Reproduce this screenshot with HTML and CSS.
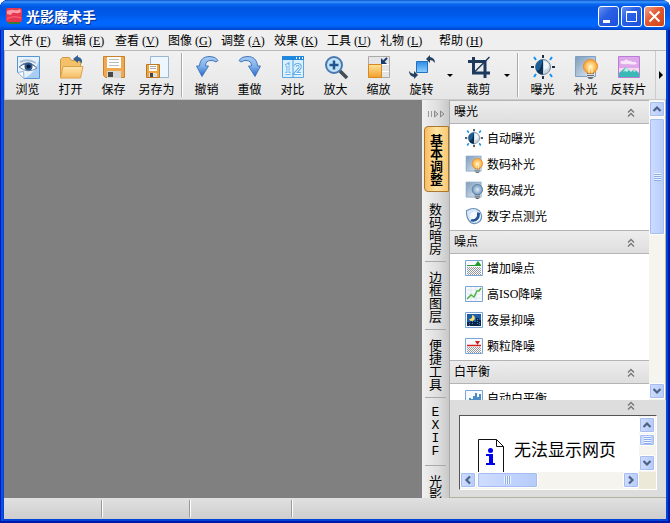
FILE: index.html
```html
<!DOCTYPE html>
<html lang="zh-CN">
<head>
<meta charset="utf-8">
<title>光影魔术手</title>
<link rel="stylesheet" href="styles.css">
</head>
<body>
<svg class="defs" aria-hidden="true">
  <defs>
    <linearGradient id="sky" x1="0" y1="0" x2="1" y2="1"><stop offset="0" stop-color="#7d9cba"/><stop offset="1" stop-color="#e4edf5"/></linearGradient>
    <linearGradient id="arc" x1="0" y1="0" x2="0" y2="1"><stop offset="0" stop-color="#a8cbf2"/><stop offset=".5" stop-color="#7fb0ea"/><stop offset="1" stop-color="#2565cc"/></linearGradient>
    <linearGradient id="gold" x1="0" y1="0" x2="0" y2="1"><stop offset="0" stop-color="#ffe39a"/><stop offset="1" stop-color="#f0a02a"/></linearGradient>
    <linearGradient id="folder" x1="0" y1="0" x2="0" y2="1"><stop offset="0" stop-color="#ffe6ae"/><stop offset="1" stop-color="#f5bd62"/></linearGradient>
    <linearGradient id="blue" x1="0" y1="0" x2="0" y2="1"><stop offset="0" stop-color="#2f8ae8"/><stop offset="1" stop-color="#8fd0fb"/></linearGradient>
    <radialGradient id="glow"><stop offset="0" stop-color="#fff6c8"/><stop offset="1" stop-color="#fba42e"/></radialGradient>
    <radialGradient id="dim"><stop offset="0" stop-color="#dce9f4"/><stop offset="1" stop-color="#6f97bd"/></radialGradient>
    <symbol id="sun" viewBox="0 0 24 24">
      <path d="M12 0v3M12 21v3M0 12h3M21 12h3" stroke="#1b3049" stroke-width="2"/>
      <path d="M3 2l2 3M21 2l-2 3M3 22l2-3M21 22l-2-3" stroke="#1592f0" stroke-width="2"/>
      <circle cx="12" cy="12" r="7.500" fill="#c9d8e2" stroke="#71828f"/>
      <path d="M12 4.500a7.500 7.500 0 0 0 0 15z" fill="#1c5e98"/>
      <path d="M12 4.500v15q-5 0-6.500-4 4 1 6.500-11z" fill="#102f52"/>
      <path d="M13 6q5 1 5 5-1 3-5 4z" fill="#f0f5f8"/>
    </symbol>
    <symbol id="bulb" viewBox="0 0 24 24">
      <path d="M1.500 1.500h20v20h-20z" fill="url(#sky)" stroke="#7da0c4"/>
      <path d="M13 17h7v5l-2 2h-3l-2-2z" fill="#68717b"/><path d="M13 19.500h7M13 21.500h7" stroke="#d6dce2"/>
      <circle cx="16.500" cy="11.500" r="7" fill="url(#glow)" stroke="#e8892a"/><path d="M15 18v-5l1.500-2 1.500 2v5" fill="none" stroke="#fff5c8"/>
    </symbol>
    <symbol id="bulb-off" viewBox="0 0 24 24">
      <path d="M1.500 1.500h20v20h-20z" fill="url(#sky)" stroke="#7da0c4"/>
      <path d="M13 17h7v5l-2 2h-3l-2-2z" fill="#56636f"/><path d="M13 19.500h7M13 21.500h7" stroke="#d6dce2"/>
      <circle cx="16.500" cy="11.500" r="7" fill="url(#dim)" stroke="#4c749c"/>
    </symbol>
    <symbol id="undo" viewBox="0 0 24 24"><path d="M1.500 11h3C5 4 9 1.500 15 1.500q6 0 8 4l-2 1.500q-2-1.500-5-1.500-5.500 0-5.500 5.500h3L7 21.500z" fill="url(#arc)" stroke="#4377bd"/></symbol>
    <symbol id="chev" viewBox="0 0 8 10"><path d="M1 4.500l3-3 3 3M1 8.500l3-3 3 3" fill="none" stroke="#777" stroke-width="1.400"/></symbol>
    <symbol id="up" viewBox="0 0 10 10"><path d="M1.500 7L5 3.500 8.500 7" fill="none" stroke="#4d6185" stroke-width="2.200"/></symbol>
    <symbol id="tile" viewBox="0 0 18 16"><path d="M.5.500h17v15H.5z" fill="#f6faff" stroke="#7ba5d2"/></symbol>
    <pattern id="grain" width="2" height="2" patternUnits="userSpaceOnUse"><path d="M0 0h1v1H0zM1 1h1v1H1z" fill="#999"/></pattern>
  </defs>
</svg>
<div class="window">
  <header class="titlebar">
    <svg class="logo" viewBox="0 0 16 16"><path d="M2 13h12v3H2z" fill="#397b37"/><rect width="16" height="14" rx="2" fill="#e5374f"/><path d="M1 3q4-2 7-1t6-1l1 3q-3 2-6 1T5 7L1 6z" fill="#ff9aa8"/><path d="M1 11q6-4 14-1" stroke="#ff7080" fill="none"/></svg>
    <h1>光影魔术手</h1>
    <div class="window-controls">
      <button aria-label="最小化"><svg viewBox="0 0 19 19"><path d="M4 13h7v3H4z" fill="#fff"/></svg></button>
      <button aria-label="最大化"><svg viewBox="0 0 19 19"><path d="M4.500 5.500h10v9h-10zM4 5h11" fill="none" stroke="#fff"/><path d="M4 5h11" stroke="#fff" stroke-width="2"/></svg></button>
      <button class="close" aria-label="关闭"><svg viewBox="0 0 19 19"><path d="M4.500 4.500l10 10M14.500 4.500l-10 10" stroke="#fff" stroke-width="2"/></svg></button>
    </div>
  </header>
  <nav class="menubar">
    <button>文件<span>(<u>F</u>)</span></button><button>编辑<span>(<u>E</u>)</span></button><button>查看<span>(<u>V</u>)</span></button><button>图像<span>(<u>G</u>)</span></button><button>调整<span>(<u>A</u>)</span></button><button>效果<span>(<u>K</u>)</span></button><button>工具<span>(<u>U</u>)</span></button><button class="wide">礼物<span>(<u>L</u>)</span></button><button>帮助<span>(<u>H</u>)</span></button>
  </nav>
  <div class="toolbar" role="toolbar">
    <button class="tool"><svg viewBox="0 0 24 24"><path d="M1.500 1.500h22v22H8l-6.500-6z" fill="#e8f2fc"/><path d="M23 5v18H9q10-5 14-18z" fill="#a9cdf3"/><path d="M1.500 18V1.500h22v22H8" fill="none" stroke="#5796d5"/><path d="M3 12q9-8 18 1-9 6-18-1z" fill="#fff" stroke="#6c87a8"/><path d="M3 12Q11 3 21 12.500 12 7 3 12z" fill="#5c7796"/><circle cx="12.500" cy="11.500" r="4" fill="#315888"/><circle cx="12.500" cy="11.500" r="2" fill="#071c3b"/><path d="M4 7q8-4 16 1" fill="none" stroke="#a9bfd8" stroke-width="2"/><path d="M1.500 17.500l6-1 .5 7z" fill="#fff" stroke="#8fb4da"/></svg>浏览</button>
    <button class="tool"><svg viewBox="0 0 24 24"><path d="M1.500 22V4.500l2-2h7l2 3h9V22z" fill="#f4c069" stroke="#d09a41"/><path d="M4 11.500h20L21.500 23H1.500z" fill="url(#folder)" stroke="#dba24c"/><path d="M14 4l5-4v2q5 1 4 7-1-3-4-3v2z" fill="#315f91"/></svg>打开</button>
    <button class="tool"><svg viewBox="0 0 24 24"><path d="M1.500 1.500h21v21h-19l-2-2z" fill="#f0a94e" stroke="#c9832c"/><path d="M5 2h14v11H5z" fill="#fff"/><path d="M7 4.500h10M7 7.500h10M7 10.500h10" stroke="#bbb"/><path d="M5 16h14v7H5z" fill="#d5d7d9"/><path d="M6 17h5v5H6z" fill="#46484b"/></svg>保存</button>
    <button class="tool"><svg viewBox="0 0 24 24"><path d="M5.500 1.500h18v21h-18z" fill="#eef6fd" stroke="#98b7d5"/><path d="M1.500 9.500h13v13h-13z" fill="#f0a640" stroke="#bc7923"/><path d="M4 10h8v6H4z" fill="#fff"/><path d="M5 11.500h6M5 13.500h6" stroke="#aaa"/><path d="M4 18h8v4H4z" fill="#ddd"/><path d="M5 18h3v4H5z" fill="#444"/></svg>另存为</button>
    <i class="divider"></i>
    <button class="tool"><svg viewBox="0 0 24 24"><use href="#undo"/></svg>撤销</button>
    <button class="tool"><svg viewBox="0 0 24 24"><g transform="matrix(-1 0 0 1 24 0)"><use href="#undo"/></g></svg>重做</button>
    <button class="tool"><svg viewBox="0 0 24 24"><path d="M1.500 1.500h21v21h-21z" fill="#d9f0fe" stroke="#60a6de"/><path d="M1 1h22v4H1z" fill="#2087df"/><path d="M15 3h1M18 3h1M21 3h1" stroke="#fff" stroke-width="2"/><path d="M12 5v18" stroke="#4e9ee0"/><path d="M4.500 11L7 9.500V18M4.500 18.500h5M14 11q1-2 3.500-1.500t1.500 3.500l-5 5.500h6" fill="none" stroke="#68b0ea" stroke-width="3"/><path d="M4.500 11L7 9.500V18M4.500 18.500h5M14 11q1-2 3.500-1.500t1.500 3.500l-5 5.500h6" fill="none" stroke="#fff"/></svg>对比</button>
    <button class="tool"><svg viewBox="0 0 24 24"><path d="M15 15l8 8" stroke="#444c56" stroke-width="3.500"/><circle cx="10" cy="10" r="8" fill="#c3e4f8" stroke="#4a79b2" stroke-width="2"/><path d="M10 5.500v9M5.500 10h9" stroke="#21558f" stroke-width="2.500"/></svg>放大</button>
    <button class="tool"><svg viewBox="0 0 24 24"><path d="M1.500 1.500h21v21h-21z" fill="#e5e5e5" stroke="#aaa"/><path d="M14.500 2v20M2 9.500h20M14 16.500h8" stroke="#fff"/><path d="M1.500 9.500h13v13h-13z" fill="url(#gold)" stroke="#d98721"/><path d="M20 3l-4 4" stroke="#173c70" stroke-width="2"/><path d="M14 3v6h6z" fill="#173c70"/></svg>缩放</button>
    <button class="tool"><svg viewBox="0 0 24 24"><path d="M6.500 6.500h11v11h-11z" fill="url(#blue)" stroke="#2170bb"/><path d="M16 4l4-4v2q5 1 5 6-2-3-5-3v3zM8 20l-4 4v-2q-5-1-5-6 2 3 5 3v-3z" fill="#243f60"/></svg>旋转</button>
    <button class="drop" aria-label="旋转选项"></button>
    <button class="tool"><svg viewBox="0 0 24 24"><path d="M6.500 2v16H23M1 6.500h17V23" fill="none" stroke="#1d395c" stroke-width="3"/><path d="M22.500 2L8 16.500" stroke="#1d395c" stroke-width="1.500"/></svg>裁剪</button>
    <button class="drop" aria-label="裁剪选项"></button>
    <i class="divider"></i>
    <button class="tool"><svg viewBox="0 0 24 24"><use href="#sun"/></svg>曝光</button>
    <button class="tool"><svg viewBox="0 0 24 24"><use href="#bulb"/></svg>补光</button>
    <button class="tool"><svg viewBox="0 0 24 24"><path d="M1.500 1.500h21v21h-21z" fill="#dca8ea" stroke="#b97bd6"/><path d="M3 8q1-3 4-2 2-3 5 0 2-1 3 1 4-1 5 2-4 1-9 0-5 1-8-1z" fill="#f9e4f8"/><path d="M2 13h20v7H2z" fill="#ffd5ed"/><path d="M2 18l7-6 5 5 3-3 5 4v4H2z" fill="#38b9b5"/><path d="M9 12l3 3-2 2-2-1-2 1zM17 14l2 2-2 1-1-2z" fill="#b4f1e6"/></svg>反转片</button>
    <button class="more" aria-label="更多工具"></button>
  </div>
  <main class="workspace">
    <section class="canvas" aria-label="图像"></section>
    <nav class="tabs">
      <button class="collapse" aria-label="收起面板"><svg viewBox="0 0 18 8"><path d="M1.500 1v6M4.500 1v6" stroke="#999"/><path d="M7.500 1v6l3.500-3zM13.500 1v6L17 4z" fill="#ccc" stroke="#888"/></svg></button>
      <button class="tab active"><span>基本调整</span></button>
      <button class="tab"><span>数码暗房</span></button>
      <button class="tab"><span>边框图层</span></button>
      <button class="tab"><span>便捷工具</span></button>
      <button class="tab latin"><span>EXIF</span></button>
      <button class="tab last"><span>光影</span></button>
    </nav>
    <aside class="panel">
      <div class="list">
        <div class="groups">
          <button class="group-title">曝光<svg><use href="#chev"/></svg></button>
          <div class="group">
            <button class="action"><svg viewBox="0 0 24 24"><use href="#sun"/></svg>自动曝光</button>
            <button class="action"><svg viewBox="0 0 24 24"><use href="#bulb"/></svg>数码补光</button>
            <button class="action"><svg viewBox="0 0 24 24"><use href="#bulb-off"/></svg>数码减光</button>
            <button class="action"><svg viewBox="0 0 24 24"><path d="M2 5Q12-1 19 5q6 7 1 14-6 5-12 2Q1 15 2 5z" fill="#d8e8f7" stroke="#6c90ba" stroke-width="1.500"/><circle cx="13.500" cy="13" r="7" fill="#f5f9fd"/><path d="M7 19q13 3 13-11l-4-1v5q-2 5-7 4z" fill="#1f5597"/></svg>数字点测光</button>
          </div>
          <button class="group-title">噪点<svg><use href="#chev"/></svg></button>
          <div class="group">
            <button class="action"><svg viewBox="0 0 18 18"><use href="#tile" y="1" width="18" height="16"/><path d="M2 8h14v8H2z" fill="url(#grain)"/><path d="M2 6.500h14" stroke="#2a962d"/><path d="M10 6l3-4 3 4z" fill="#179e20"/></svg>增加噪点</button>
            <button class="action"><svg viewBox="0 0 18 18"><use href="#tile" y="1" width="18" height="16"/><path d="M2 5h14M2 9h14M2 13h14M6 2v14M11 2v14" stroke="#dde5ed"/><path d="M2 14l4-4 3 2 3-6h2l2-3" fill="none" stroke="#4eb33e" stroke-width="1.500"/></svg>高<span>ISO</span>降噪</button>
            <button class="action"><svg viewBox="0 0 18 18"><use href="#tile" y="1" width="18" height="16"/><path d="M2 3h14v12H2z" fill="#1f5da6"/><path d="M2 15v-4h4V9h3v2h2V7h3v2h2v6z" fill="#092547"/><path d="M7 4a3 3 0 1 1-3 4q4 0 3-4z" fill="#ffdf70"/><path d="M4.500 12v3M7.500 10v4M12.500 8v6M14.500 11v3" stroke="#4596c8" stroke-dasharray="1 1"/></svg>夜景抑噪</button>
            <button class="action"><svg viewBox="0 0 18 18"><use href="#tile" y="1" width="18" height="16"/><path d="M2 10h14v6H2z" fill="url(#grain)"/><path d="M2 8.500h14" stroke="#d02020" stroke-width="1.500"/><path d="M10 4h5l-2.500 4z" fill="#d02020"/></svg>颗粒降噪</button>
          </div>
          <button class="group-title">白平衡<svg><use href="#chev"/></svg></button>
          <div class="group">
            <button class="action"><svg viewBox="0 0 18 18"><use href="#tile" y="1" width="18" height="16"/><path d="M3 15v-4M5 15V9M7 15v-5M9 15V7M11 15V4M13 15V8M15 15V5" stroke="#1268b0" stroke-width="1.500"/></svg>自动白平衡</button>
          </div>
        </div>
        <div class="scroll vertical">
          <button aria-label="向上"><svg><use href="#up"/></svg></button>
          <div class="thumb"></div>
          <button class="end down" aria-label="向下"><svg><use href="#up"/></svg></button>
        </div>
      </div>
      <div class="info">
        <button class="info-toggle" aria-label="收起信息"><svg><use href="#chev"/></svg></button>
        <div class="browser">
          <div class="page">
            <svg viewBox="0 0 26 34"><path d="M.5 40V.5h18l7 7V40" fill="#fff" stroke="#111"/><path d="M18.500.500v7h7" fill="none" stroke="#111"/><path d="M8 15h7v9h2v2H8v-2h3v-7H8z" fill="#00e"/><circle cx="12.500" cy="11.500" r="2.500" fill="#00e"/></svg>
            <p>无法显示网页</p>
          </div>
          <div class="scroll vertical">
            <button aria-label="向上"><svg><use href="#up"/></svg></button>
            <div class="thumb"></div>
            <button class="end down" aria-label="向下"><svg><use href="#up"/></svg></button>
          </div>
          <div class="scroll horizontal">
            <button class="left" aria-label="向左"><svg><use href="#up"/></svg></button>
            <div class="thumb"></div>
            <button class="end right" aria-label="向右"><svg><use href="#up"/></svg></button>
          </div>
        </div>
      </div>
    </aside>
  </main>
  <footer class="statusbar"><span></span><span></span><span></span><span></span></footer>
</div>
</body>
</html>
```
FILE: styles.css
```css
* { box-sizing: border-box; }
body {
  margin: 0;
  background: #fff;
  color: #000;
  font: 12px/16px "Noto Sans CJK SC", sans-serif;
}
button {
  margin: 0;
  padding: 0;
  border: 0;
  background: none;
  color: inherit;
  font: inherit;
}
svg { display: block; flex: none; overflow: visible; }
.defs { position: absolute; width: 0; height: 0; }
.window {
  display: flex;
  flex-direction: column;
  height: 100vh;
  padding: 0 4px 4px;
  overflow: hidden;
  border-radius: 8px 8px 0 0;
  background: #0144d8;
  box-shadow: inset 1px 0 #0019b0, inset -2px -2px #0019a8, inset 3px 0 #0a50e8;
}

/* Title bar */
.titlebar {
  display: flex;
  flex: none;
  align-items: center;
  height: 30px;
  margin: 0 -4px;
  padding: 2px 5px 0 6px;
  border-radius: 8px 8px 0 0;
  background: linear-gradient(#0a50c8 0, #3e98ff 2px, #0867ee 4px, #0055e3 8px, #0058e8 14px, #0068ff 22px, #0064fa 26px, #0043c4 30px);
}
.logo { width: 16px; height: 16px; }
h1 {
  margin: 0 0 0 4px;
  color: #fff;
  font-size: 14px;
  line-height: 20px;
  text-shadow: 1px 1px #07318f;
}
.window-controls { display: flex; gap: 2px; margin-left: auto; }
.window-controls button {
  width: 21px;
  height: 21px;
  border: 1px solid #fff;
  border-radius: 3px;
  background: linear-gradient(135deg, #6a8ff0, #2a60e4 40%, #1c50dc);
}
.window-controls svg { width: 19px; height: 19px; }
.window-controls .close { background: linear-gradient(135deg, #f0a088, #e4582f 45%, #cf4418); }

/* Menu */
.menubar {
  display: flex;
  flex: none;
  height: 21px;
  padding-left: 5px;
  border-bottom: 1px solid #b8b8b8;
  background: #efefef;
}
.menubar button { width: 53px; text-align: left; white-space: nowrap; }
.menubar .wide { width: 59px; }
.menubar span { margin-left: 3px; font-family: "Liberation Serif", serif; }

/* Toolbar */
.toolbar {
  display: flex;
  flex: none;
  height: 49px;
  padding-left: 1px;
  border-bottom: 1px solid #ccc;
  border-left: 1px solid #bbb;
  background: linear-gradient(#f1f1f1, #e6e6e6);
}
.tool {
  display: flex;
  flex: none;
  flex-direction: column;
  align-items: center;
  gap: 2px;
  width: 43px;
  padding-top: 4px;
  white-space: nowrap;
}
.tool svg { width: 24px; height: 24px; }
.divider {
  flex: none;
  width: 2px;
  margin: 2px 2px 2px 3px;
  border-left: 1px solid #aaa;
  border-right: 1px solid #fff;
}
.drop { display: flex; flex: none; justify-content: center; width: 14px; padding-top: 23px; }
.drop::after { border: 3px solid transparent; border-top-color: #000; border-bottom: 0; content: ""; }
.more {
  display: flex;
  align-items: center;
  justify-content: center;
  width: 11px;
  margin-left: auto;
  border-left: 1px solid #ccc;
}
.more::after { border: 4px solid transparent; border-left-color: #000; border-right: 0; content: ""; }

/* Workspace */
.workspace { display: flex; flex: 1; min-height: 0; }
.canvas { flex: 1; background: #808080; }
.tabs {
  flex: none;
  width: 28px;
  padding-top: 1px;
  overflow: hidden;
  border-right: 1px solid #aaa;
  background: linear-gradient(90deg, #f0f0f0, #dedede 60%, #c8c8c8);
}
.collapse { display: grid; place-items: center; width: 100%; height: 25px; }
.collapse svg { width: 18px; height: 8px; }
.tab {
  display: grid;
  place-items: center;
  width: 21px;
  height: 68px;
  margin-left: 3px;
  font-size: 13px;
  line-height: 13px;
}
.tab:not(.active) { border-bottom: 1px solid #aaa; }
.tab span { width: 13px; word-break: break-all; }
.tab.latin { font-family: "Liberation Mono", monospace; }
.tab.last { height: 40px; padding-top: 8px; border: 0; place-items: start center; }
.tab.active {
  width: 25px;
  height: 66px;
  margin: 0 0 2px 2px;
  border: 1px solid #a9782f;
  border-radius: 4px 0 0 4px;
  background: linear-gradient(90deg, #f9bd60, #ffe4a4 50%, #fbc772);
  font-weight: bold;
}

/* Panel */
.panel { display: flex; flex: none; flex-direction: column; width: 216px; background: #ddd; }
.list { display: flex; flex: 1; min-height: 0; overflow: hidden; }
.groups { flex: 1; overflow: hidden; background: #fff; }
.group-title {
  display: flex;
  align-items: center;
  justify-content: space-between;
  width: 100%;
  height: 24px;
  padding: 0 14px 2px 4px;
  border: solid #b4b4b4;
  border-width: 1px 0;
  background: linear-gradient(#ededed, #dedede);
}
.group-title svg, .info-toggle svg { width: 8px; height: 10px; }
.group-title svg { margin-top: 4px; }
.group { padding: 1px 0; }
.action {
  display: flex;
  align-items: center;
  gap: 4px;
  width: 100%;
  height: 26px;
  padding-left: 15px;
  white-space: nowrap;
}
.action svg { width: 18px; height: 18px; }
.action span { margin: 0 -4px; font-family: "Liberation Serif", serif; }

/* Scroll bars */
.scroll { display: flex; gap: 1px; background: #f5f4ee; }
.scroll.vertical { flex-direction: column; width: 17px; padding: 1px 0; }
.scroll button, .thumb {
  flex: none;
  border: 1px solid #fff;
  border-radius: 2px;
  background: linear-gradient(90deg, #cedcff, #b7ccfa);
  box-shadow: inset 0 0 0 1px #a5bdf0;
}
.scroll button { display: grid; place-items: center; width: 16px; height: 16px; }
.scroll svg { width: 10px; height: 10px; }
.scroll.vertical .end { margin-top: auto; }
.scroll.horizontal .end { margin-left: auto; }
.down svg { transform: rotate(180deg); }
.left svg { transform: rotate(-90deg); }
.right svg { transform: rotate(90deg); }
.thumb { display: grid; place-items: center; width: 16px; height: 117px; }
.thumb::after {
  width: 7px;
  height: 8px;
  background: repeating-linear-gradient(#eef4ff 0 1px, #8caee8 1px 2px);
  content: "";
}
.list .scroll { border-right: 1px solid #bbb8a8; }

/* Information page */
.info { flex: none; padding: 1px 9px 7px; border-bottom: 1px solid #b1b19c; }
.info-toggle { display: flex; justify-content: flex-end; width: 100%; height: 14px; padding-right: 22px; }
.browser {
  display: grid;
  grid-template-columns: 1fr 17px;
  grid-template-rows: 56px 17px;
  border: 1px solid #fff;
  border-top-color: #555;
  border-left-color: #555;
  background: #ece9d8;
}
.page { display: flex; gap: 10px; padding: 23px 0 0 18px; overflow: hidden; background: #fff; }
.page svg { width: 26px; height: 34px; }
.page p { margin: 0; font-size: 17px; line-height: 20px; white-space: nowrap; }
.browser .thumb { height: 12px; }
.browser .horizontal .thumb { width: 61px; height: 16px; }
.horizontal .thumb::after { background: repeating-linear-gradient(90deg, #eef4ff 0 1px, #8caee8 1px 2px); }

/* Status bar */
.statusbar {
  display: grid;
  flex: none;
  grid-template-columns: 98px 88px 102px 1fr;
  height: 21px;
  padding: 2px 0;
  background: linear-gradient(#e0e0e0, #cecece);
}
.statusbar span:not(:last-child) { border-right: 1px solid #999; box-shadow: 1px 0 #fff; }
```
